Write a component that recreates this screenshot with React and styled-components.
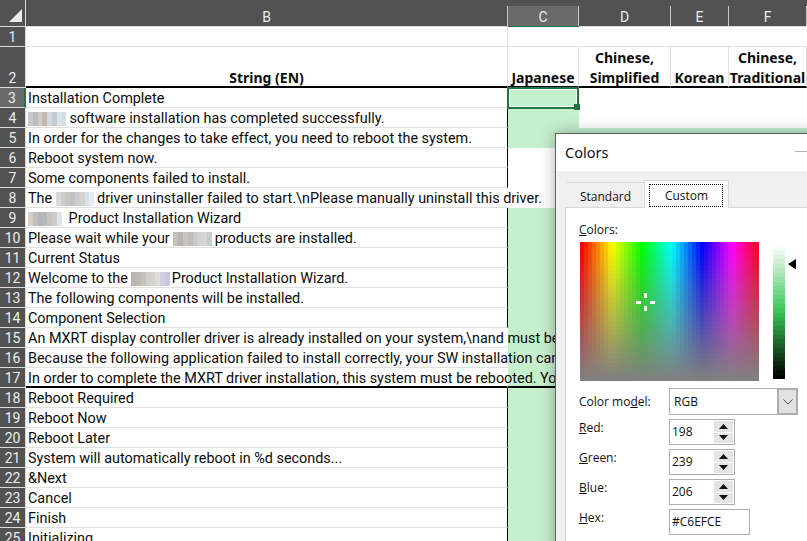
// App.jsx
import React from 'react';
import styled, { createGlobalStyle } from 'styled-components';

const GlobalStyle = createGlobalStyle`
    html, body {
        margin: 0;
        padding: 0;
        background: #fff;
    }
`;

const Page = styled.div`
    position: relative;
    width: 807px;
    height: 541px;
    overflow: hidden;
    background: #fff;
    font-family: Roboto, "Liberation Sans", sans-serif;
    font-size: 14.4px;
    color: #0c0c0c;
`;

const HeaderBar = styled.div`
    display: flex;
    height: 27px;
    box-sizing: border-box;
    background: #525252;
    border-bottom: 1px solid #dcdcdc;
`;

const Corner = styled.div`
    width: 26px;
    flex: none;
    border-right: 1px solid #dcdcdc;
    display: flex;
    align-items: flex-end;
    justify-content: flex-end;
    padding: 0 3px 4px 0;
    box-sizing: border-box;
`;

const ColHead = styled.div`
    width: ${(p) => p.$w}px;
    flex: none;
    box-sizing: border-box;
    margin-top: 6px;
    height: 20px;
    line-height: 22px;
    text-align: center;
    font-size: 14px;
    color: #ececec;
    border-right: 1px solid #c8c8c8;
    background: ${(p) => (p.$active ? '#6a6a6a' : 'transparent')};
    box-shadow: ${(p) => (p.$active ? '0 1px 0 #217346' : 'none')};
`;

const Row = styled.div`
    display: flex;
    height: ${(p) => p.$h || 20}px;
`;

const RowHead = styled.div`
    width: 26px;
    flex: none;
    box-sizing: border-box;
    background: ${(p) => (p.$active ? '#6a6a6a' : '#525252')};
    color: #ececec;
    border-right: ${(p) => (p.$active ? '2px solid #217346' : '1px solid #dcdcdc')};
    border-bottom: 1px solid #dcdcdc;
    font-size: 14px;
    display: flex;
    align-items: flex-end;
    justify-content: center;
    line-height: 17px;
`;

const TextCell = styled.div`
    width: 482px;
    flex: none;
    box-sizing: border-box;
    padding-left: 2px;
    line-height: 21px;
    white-space: nowrap;
    position: relative;
    z-index: 1;
    border-bottom: ${(p) => (p.$thick ? '2px solid #000' : '1px solid #e0e0e0')};
    border-right: 1px solid ${(p) => (p.$spill ? 'transparent' : '#000')};
`;

const TitleCell = styled.div`
    width: ${(p) => p.$w}px;
    flex: none;
    box-sizing: border-box;
    display: flex;
    align-items: flex-end;
    justify-content: center;
    text-align: center;
    font-weight: 700;
    font-family: "Noto Sans", sans-serif;
    font-size: 14px;
    line-height: 20px;
    white-space: nowrap;
    border-right: 1px solid ${(p) => (p.$open ? 'transparent' : '#e0e0e0')};
    border-bottom: ${(p) => (p.$thick ? '2px solid #000' : '1px solid #e0e0e0')};
`;

const TitleText = styled.span`
    margin-bottom: -2px;
`;

const FillCell = styled.div`
    width: 71px;
    flex: none;
    box-sizing: border-box;
    position: relative;
    background: ${(p) => (p.$green ? '#c6efce' : '#fff')};
    border-bottom: ${(p) => (p.$thick ? '2px solid #000' : 'none')};
`;

const RestCell = styled.div`
    flex: 1;
    background: ${(p) => (p.$green ? '#c6efce' : '#fff')};
    border-bottom: ${(p) => (p.$thick ? '2px solid #000' : p.$line ? '1px solid #e0e0e0' : 'none')};
`;

const Selection = styled.div`
    position: absolute;
    z-index: 2;
    left: -1px;
    top: -1px;
    width: 72px;
    height: 22px;
    box-sizing: border-box;
    border: 2px solid #217346;
    box-shadow: inset 0 0 0 1px #fff;
`;

const Handle = styled.div`
    position: absolute;
    right: -3px;
    bottom: -3px;
    width: 6px;
    height: 6px;
    background: #217346;
`;

const Blur = styled.span`
    display: inline-flex;
    vertical-align: -3px;
    height: 14px;
    margin-right: ${(p) => p.$gap}px;
`;

const BlurDot = styled.span`
    width: 4.8px;
    height: 14px;
`;

const Dialog = styled.div`
    position: absolute;
    z-index: 5;
    left: 555px;
    top: 133px;
    width: 300px;
    height: 460px;
    box-sizing: border-box;
    border: 1px solid #5f6462;
    background: #f0f0f0;
    box-shadow: 0 0 14px rgba(0, 0, 0, 0.32);
    font-family: "Open Sans", "Noto Sans", sans-serif;
    font-size: 12px;
    color: #111;
`;

const TitleBar = styled.div`
    height: 37px;
    box-sizing: border-box;
    padding: 0 0 2px 9px;
    background: #fff;
    display: flex;
    align-items: center;
    justify-content: space-between;
    font-size: 14.5px;
    font-family: "Noto Sans", sans-serif;
`;

const MinButton = styled.div`
    width: 12px;
    height: 1px;
    margin-right: 47px;
    background: #b4b4b4;
`;

const Tabs = styled.div`
    display: flex;
    align-items: flex-end;
    height: 36px;
    padding-left: 11px;
`;

const Tab = styled.div`
    box-sizing: border-box;
    position: relative;
    text-align: center;
    ${(p) => (p.$active
        ? `
        width: 85px;
        height: 28px;
        line-height: 29px;
        background: #fff;
        border: 1px solid #d9d9d9;
        border-bottom: none;
        margin-bottom: -1px;
        z-index: 1;
    `
        : `
        width: 77px;
        height: 25px;
        line-height: 27px;
        border-top: 1px solid #d9d9d9;
    `)}
`;

const FocusRing = styled.div`
    position: absolute;
    inset: 3px 5px 1px 4px;
    border: 1px dotted #000;
`;

const Panel = styled.div`
    margin-left: 9px;
    height: 400px;
    box-sizing: border-box;
    background: #fff;
    border: 1px solid #d9d9d9;
    padding: 13px 0 0 13px;
`;

const PanelLabel = styled.div`
    height: 21px;
    line-height: 17px;
`;

const PickerRow = styled.div`
    display: flex;
    align-items: flex-start;
`;

const Spectrum = styled.div`
    position: relative;
    width: 179px;
    height: 139px;
    margin-left: 1px;
    flex: none;
    svg {
        display: block;
    }
`;

const CrossArm = styled.div`
    position: absolute;
    background: #fff;
    left: ${(p) => p.$x}px;
    top: ${(p) => p.$y}px;
    width: ${(p) => p.$w}px;
    height: ${(p) => p.$h}px;
`;

const LumBar = styled.div`
    width: 12px;
    height: 133px;
    margin: 4px 0 0 14px;
    flex: none;
    svg {
        display: block;
    }
`;

const Pointer = styled.svg`
    margin: 17px 0 0 3px;
    flex: none;
`;

const FormRow = styled.div`
    display: flex;
    align-items: flex-start;
    margin-top: ${(p) => p.$top}px;
`;

const FormLabel = styled.div`
    width: 90px;
    flex: none;
    line-height: ${(p) => p.$lh || 18}px;
`;

const SelectBox = styled.div`
    box-sizing: border-box;
    width: 129px;
    height: 27px;
    border: 1px solid #adadad;
    display: flex;
    align-items: stretch;
    background: #fff;
`;

const SelectValue = styled.div`
    flex: 1;
    padding-left: 4px;
    line-height: 25px;
`;

const SelectArrow = styled.div`
    width: 21px;
    box-sizing: border-box;
    background: #e1e1e1;
    border: 2px solid #adadad;
    display: flex;
    align-items: center;
    justify-content: center;
    margin: -1px -1px -1px 0;
`;

const SpinBox = styled.div`
    box-sizing: border-box;
    width: 66px;
    height: 26px;
    border: 1px solid #adadad;
    display: flex;
    background: #fff;
`;

const HexBox = styled(SpinBox)`
    width: 81px;
`;

const FieldValue = styled.div`
    flex: 1;
    padding-left: 2px;
    line-height: 24px;
`;

const SpinButtons = styled.div`
    width: 20px;
    margin: 1px 0;
    display: flex;
    flex-direction: column;
    gap: 1px;
`;

const SpinButton = styled.div`
    flex: 1;
    background: #e4e4e4;
    display: flex;
    align-items: center;
    justify-content: center;
    margin-right: 1px;
`;

const columns = [
    { name: 'B', w: 482 },
    { name: 'C', w: 71, active: true },
    { name: 'D', w: 92 },
    { name: 'E', w: 58 },
    { name: 'F', w: 78 },
];

const smudges = {
    r4: ['#c9c9c9', '#bdbdbd', '#d3ccc6', '#c4b9ae', '#d8d8dc', '#c0ccd4', '#d9e2e6', '#d4dde0'],
    r8: ['#d9d9d9', '#cfcdc9', '#c9c5c1', '#c2c2c6', '#cccccc', '#d3d3d3', '#d8e2ea', '#e4eef2'],
    r9: ['#d8cfc3', '#c2c0be', '#b5b5ba', '#b8b8bc', '#c8c4c0', '#cdcaca', '#dfe3ea'],
    r10: ['#c4c0bb', '#b8b4ae', '#c8c4bd', '#bdbdbd', '#c9c9c9', '#cfd3d4', '#d2d6d6', '#c8ccce'],
    r12: ['#b8b4b0', '#bcb8b4', '#c4c0bb', '#cfcfcb', '#d6d4cc', '#dfded6', '#d0d0e0', '#c6cae0'],
};

const Redacted = ({ id, gap = 3 }) => (
    <Blur $gap={gap}>
        {smudges[id].map((color, i) => (
            <BlurDot key={i} style={{ background: color }} />
        ))}
    </Blur>
);

// rows 3 and up, c = column C is green, spill = text runs over column C
const rows = [
    { n: 3, text: 'Installation Complete', c: true, selected: true },
    { n: 4, text: <><Redacted id="r4" />software installation has completed successfully.</>, c: true },
    { n: 5, text: 'In order for the changes to take effect, you need to reboot the system.', c: true, rest: true },
    { n: 6, text: 'Reboot system now.' },
    { n: 7, text: 'Some components failed to install.' },
    { n: 8, text: <>The <Redacted id="r8" />driver uninstaller failed to start.\nPlease manually uninstall this driver.</>, spill: true },
    { n: 9, text: <><Redacted id="r9" gap={7} />Product Installation Wizard</>, c: true },
    { n: 10, text: <>Please wait while your <Redacted id="r10" />products are installed.</>, c: true },
    { n: 11, text: 'Current Status', c: true },
    { n: 12, text: <>Welcome to the <Redacted id="r12" gap={2} />Product Installation Wizard.</>, c: true },
    { n: 13, text: 'The following components will be installed.', c: true },
    { n: 14, text: 'Component Selection', c: true },
    { n: 15, text: 'An MXRT display controller driver is already installed on your system,\\nand must be removed first.', c: true, spill: true },
    { n: 16, text: 'Because the following application failed to install correctly, your SW installation cannot continue.', c: true, spill: true },
    { n: 17, text: 'In order to complete the MXRT driver installation, this system must be rebooted.  You must reboot now.', c: true, spill: true, thick: true },
    { n: 18, text: 'Reboot Required', c: true },
    { n: 19, text: 'Reboot Now', c: true },
    { n: 20, text: 'Reboot Later', c: true },
    { n: 21, text: 'System will automatically reboot in %d seconds...', c: true },
    { n: 22, text: '&Next', c: true },
    { n: 23, text: 'Cancel', c: true },
    { n: 24, text: 'Finish', c: true },
    { n: 25, text: 'Initializing', c: true },
];

const hsl = (h, s, l) => `hsl(${h}, ${s}%, ${l}%)`;

const SpectrumArt = () => {
    const cells = [];
    for (let x = 0; x < 45; x++) {
        for (let y = 0; y < 30; y++) {
            const hue = (x / 45) * 360;
            const sat = 100 - (y / 29) * 100;
            cells.push(
                <rect key={`${x}-${y}`} x={x * 4} y={y * 4.64} width="4" height="4.7" fill={hsl(hue, sat, 50)} />
            );
        }
    }
    return <svg width="179" height="139" viewBox="0 0 179 139" shapeRendering="crispEdges">{cells}</svg>;
};

const LumArt = () => {
    const cells = [];
    for (let y = 0; y < 30; y++) {
        cells.push(
            <rect key={y} x="0" y={y * 4.44} width="12" height="4.5" fill={hsl(132, 55, 98 - (y / 29) * 98)} />
        );
    }
    return <svg width="12" height="133" viewBox="0 0 12 133" shapeRendering="crispEdges">{cells}</svg>;
};

const UpArrow = () => (
    <svg width="9" height="5" viewBox="0 0 9 5"><path d="M4.5 0L9 5H0z" fill="#111" /></svg>
);

const DownArrow = () => (
    <svg width="9" height="5" viewBox="0 0 9 5"><path d="M0 0h9L4.5 5z" fill="#111" /></svg>
);

const SpinField = ({ label, value }) => (
    <FormRow $top={4}>
        <FormLabel>{label}</FormLabel>
        <SpinBox>
            <FieldValue>{value}</FieldValue>
            <SpinButtons>
                <SpinButton><UpArrow /></SpinButton>
                <SpinButton><DownArrow /></SpinButton>
            </SpinButtons>
        </SpinBox>
    </FormRow>
);

const App = () => {
    return (
        <Page>
            <GlobalStyle />
            <HeaderBar>
                <Corner>
                    <svg width="13" height="13" viewBox="0 0 13 13"><path d="M13 0V13H0z" fill="#ececec" /></svg>
                </Corner>
                {columns.map((col) => (
                    <ColHead key={col.name} $w={col.w} $active={col.active}>{col.name}</ColHead>
                ))}
            </HeaderBar>

            <Row>
                <RowHead>1</RowHead>
                <TitleCell $w={482} />
                <TitleCell $w={71} $open />
                <RestCell $line />
            </Row>
            <Row $h={41}>
                <RowHead>2</RowHead>
                <TitleCell $w={482} $thick><TitleText>String (EN)</TitleText></TitleCell>
                <TitleCell $w={71} $thick><TitleText>Japanese</TitleText></TitleCell>
                <TitleCell $w={92} $thick><TitleText>Chinese,<br />Simplified</TitleText></TitleCell>
                <TitleCell $w={58} $thick><TitleText>Korean</TitleText></TitleCell>
                <TitleCell $w={78} $thick><TitleText>Chinese,<br />Traditional</TitleText></TitleCell>
                <RestCell $thick />
            </Row>

            {rows.map((row) => (
                <Row key={row.n}>
                    <RowHead $active={row.n === 3}>{row.n}</RowHead>
                    <TextCell $spill={row.spill} $thick={row.thick}>{row.text}</TextCell>
                    <FillCell $green={row.c} $thick={row.thick}>
                        {row.selected && (
                            <Selection>
                                <Handle />
                            </Selection>
                        )}
                    </FillCell>
                    <RestCell $green={row.rest} />
                </Row>
            ))}

            <Dialog>
                <TitleBar>
                    Colors
                    <MinButton />
                </TitleBar>
                <Tabs>
                    <Tab>Standard</Tab>
                    <Tab $active>
                        Custom
                        <FocusRing />
                    </Tab>
                </Tabs>
                <Panel>
                    <PanelLabel><u>C</u>olors:</PanelLabel>
                    <PickerRow>
                        <Spectrum>
                            <SpectrumArt />
                            <CrossArm $x={64} $y={51} $w={3} $h={5} />
                            <CrossArm $x={64} $y={64} $w={3} $h={5} />
                            <CrossArm $x={56} $y={59} $w={5} $h={3} />
                            <CrossArm $x={70} $y={59} $w={5} $h={3} />
                        </Spectrum>
                        <LumBar><LumArt /></LumBar>
                        <Pointer width="8" height="10" viewBox="0 0 8 10"><path d="M8 0V10H7L0 5z" fill="#000" /></Pointer>
                    </PickerRow>
                    <FormRow $top={7}>
                        <FormLabel $lh={27}>Color mo<u>d</u>el:</FormLabel>
                        <SelectBox>
                            <SelectValue>RGB</SelectValue>
                            <SelectArrow>
                                <svg width="10" height="6" viewBox="0 0 10 6"><path d="M0.5 0.5L5 5L9.5 0.5" fill="none" stroke="#555" /></svg>
                            </SelectArrow>
                        </SelectBox>
                    </FormRow>
                    <SpinField label={<><u>R</u>ed:</>} value="198" />
                    <SpinField label={<><u>G</u>reen:</>} value="239" />
                    <SpinField label={<><u>B</u>lue:</>} value="206" />
                    <FormRow $top={4}>
                        <FormLabel><u>H</u>ex:</FormLabel>
                        <HexBox>
                            <FieldValue>#C6EFCE</FieldValue>
                        </HexBox>
                    </FormRow>
                </Panel>
            </Dialog>
        </Page>
    );
};

export default App;
